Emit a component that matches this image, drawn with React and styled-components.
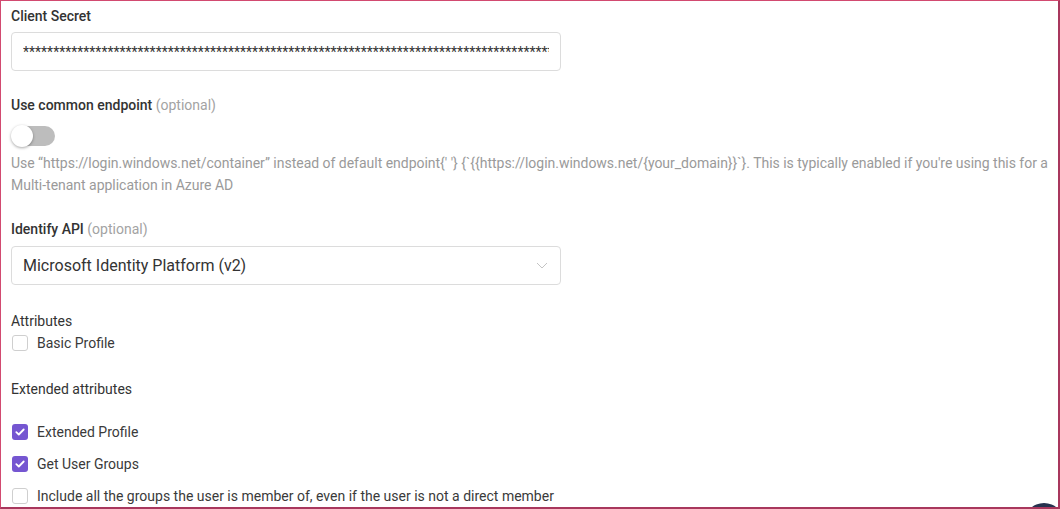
import React from "react";
import styled, { createGlobalStyle } from "styled-components";

const GlobalStyle = createGlobalStyle`
  html, body {
    margin: 0;
    padding: 0;
    background: #fff;
  }
  body {
    font-family: Roboto, "Liberation Sans", sans-serif;
    color: #3a3a3a;
  }
`;

const Frame = styled.div`
  position: relative;
  box-sizing: border-box;
  width: 1060px;
  height: 509px;
  overflow: hidden;
  border-left: 1px solid #d24a70;
  border-top: 1px solid #d24a70;
  border-right: 2px solid #a8375d;
  border-bottom: 2px solid #a8375d;
  padding: 6px 0 0 10px;
`;

const Field = styled.div`
  display: flex;
  flex-direction: column;
  margin-bottom: ${p => p.gap || 0}px;
`;

const Label = styled.div`
  font-size: 14px;
  line-height: 18px;
  font-weight: ${p => (p.plain ? 400 : 500)};
  color: #333;
  margin-bottom: ${p => p.mb || 0}px;
`;

const Optional = styled.span`
  font-weight: 400;
  color: #a3a3a3;
`;

const TextInput = styled.input`
  box-sizing: border-box;
  width: 550px;
  height: 39px;
  border: 1px solid #dcdcdc;
  border-radius: 4px;
  padding: 0 11px;
  font-family: Roboto, "Liberation Sans", sans-serif;
  font-size: 14px;
  color: #333;
  outline: none;
  background: #fff;
`;

const Toggle = styled.div`
  position: relative;
  width: 43px;
  height: 20px;
  border-radius: 10px;
  background: #bdbdbd;
  margin-left: 1px;
  &::after {
    content: "";
    position: absolute;
    left: -1px;
    top: -1px;
    width: 22px;
    height: 22px;
    border-radius: 50%;
    background: #fff;
    box-shadow: 0 1px 3px rgba(0, 0, 0, 0.35);
  }
`;

const Help = styled.div`
  font-size: 14px;
  line-height: 22px;
  letter-spacing: -0.02px;
  color: #9a9a9a;
  margin-top: 6px;
`;

const Select = styled.div`
  box-sizing: border-box;
  width: 550px;
  height: 39px;
  border: 1px solid #dcdcdc;
  border-radius: 4px;
  padding: 0 12px 0 11px;
  display: flex;
  align-items: center;
  justify-content: space-between;
  font-size: 16px;
  color: #333;
`;

const CheckRow = styled.div`
  display: flex;
  align-items: center;
  gap: 9px;
  height: 22px;
  margin-bottom: ${p => p.mb || 0}px;
  font-size: 14px;
  color: #3a3a3a;
`;

const Box = styled.span`
  box-sizing: border-box;
  width: 16px;
  height: 16px;
  border-radius: 3px;
  margin-left: 1px;
  display: inline-flex;
  align-items: center;
  justify-content: center;
  border: ${p => (p.checked ? "none" : "1px solid #cfcfcf")};
  background: ${p => (p.checked ? "#7556d1" : "#fff")};
`;

const ChatBubble = styled.div`
  position: absolute;
  left: 1023px;
  top: 502px;
  width: 40px;
  height: 40px;
  border-radius: 50%;
  background: #26324f;
`;

const helpText =
  "Use “https://login.windows.net/container” instead of default endpoint{' '} {`{{https://login.windows.net/{your_domain}}`}. This is typically enabled if you're using this for a Multi-tenant application in Azure AD";

const Check = ({ checked, label, mb }) => (
  <CheckRow mb={mb}>
    <Box checked={checked}>
      {checked && (
        <svg width="10" height="8" viewBox="0 0 10 8">
          <path d="M1.3 4.2 L3.8 6.5 L8.7 1.5" fill="none" stroke="#fff" strokeWidth="1.8" strokeLinecap="round" strokeLinejoin="round" />
        </svg>
      )}
    </Box>
    {label}
  </CheckRow>
);

const App = () => (
  <>
    <GlobalStyle />
    <Frame>
      <Field gap={25}>
        <Label mb={7}>Client Secret</Label>
        <TextInput readOnly value={"*".repeat(110)} />
      </Field>

      <Field gap={24}>
        <Label mb={12}>
          Use common endpoint <Optional>(optional)</Optional>
        </Label>
        <Toggle />
        <Help>{helpText}</Help>
      </Field>

      <Field gap={27}>
        <Label mb={8}>
          Identify API <Optional>(optional)</Optional>
        </Label>
        <Select>
          Microsoft Identity Platform (v2)
          <svg width="12" height="7" viewBox="0 0 12 7">
            <path d="M1 1 L6 6 L11 1" fill="none" stroke="#c4c4c4" strokeWidth="1" />
          </svg>
        </Select>
      </Field>

      <Field gap={26}>
        <Label plain mb={2}>Attributes</Label>
        <Check label="Basic Profile" />
      </Field>

      <Field>
        <Label plain mb={23}>Extended attributes</Label>
        <Check checked label="Extended Profile" mb={10} />
        <Check checked label="Get User Groups" mb={10} />
        <Check label="Include all the groups the user is member of, even if the user is not a direct member" />
      </Field>

      <ChatBubble />
    </Frame>
  </>
);

export default App;
